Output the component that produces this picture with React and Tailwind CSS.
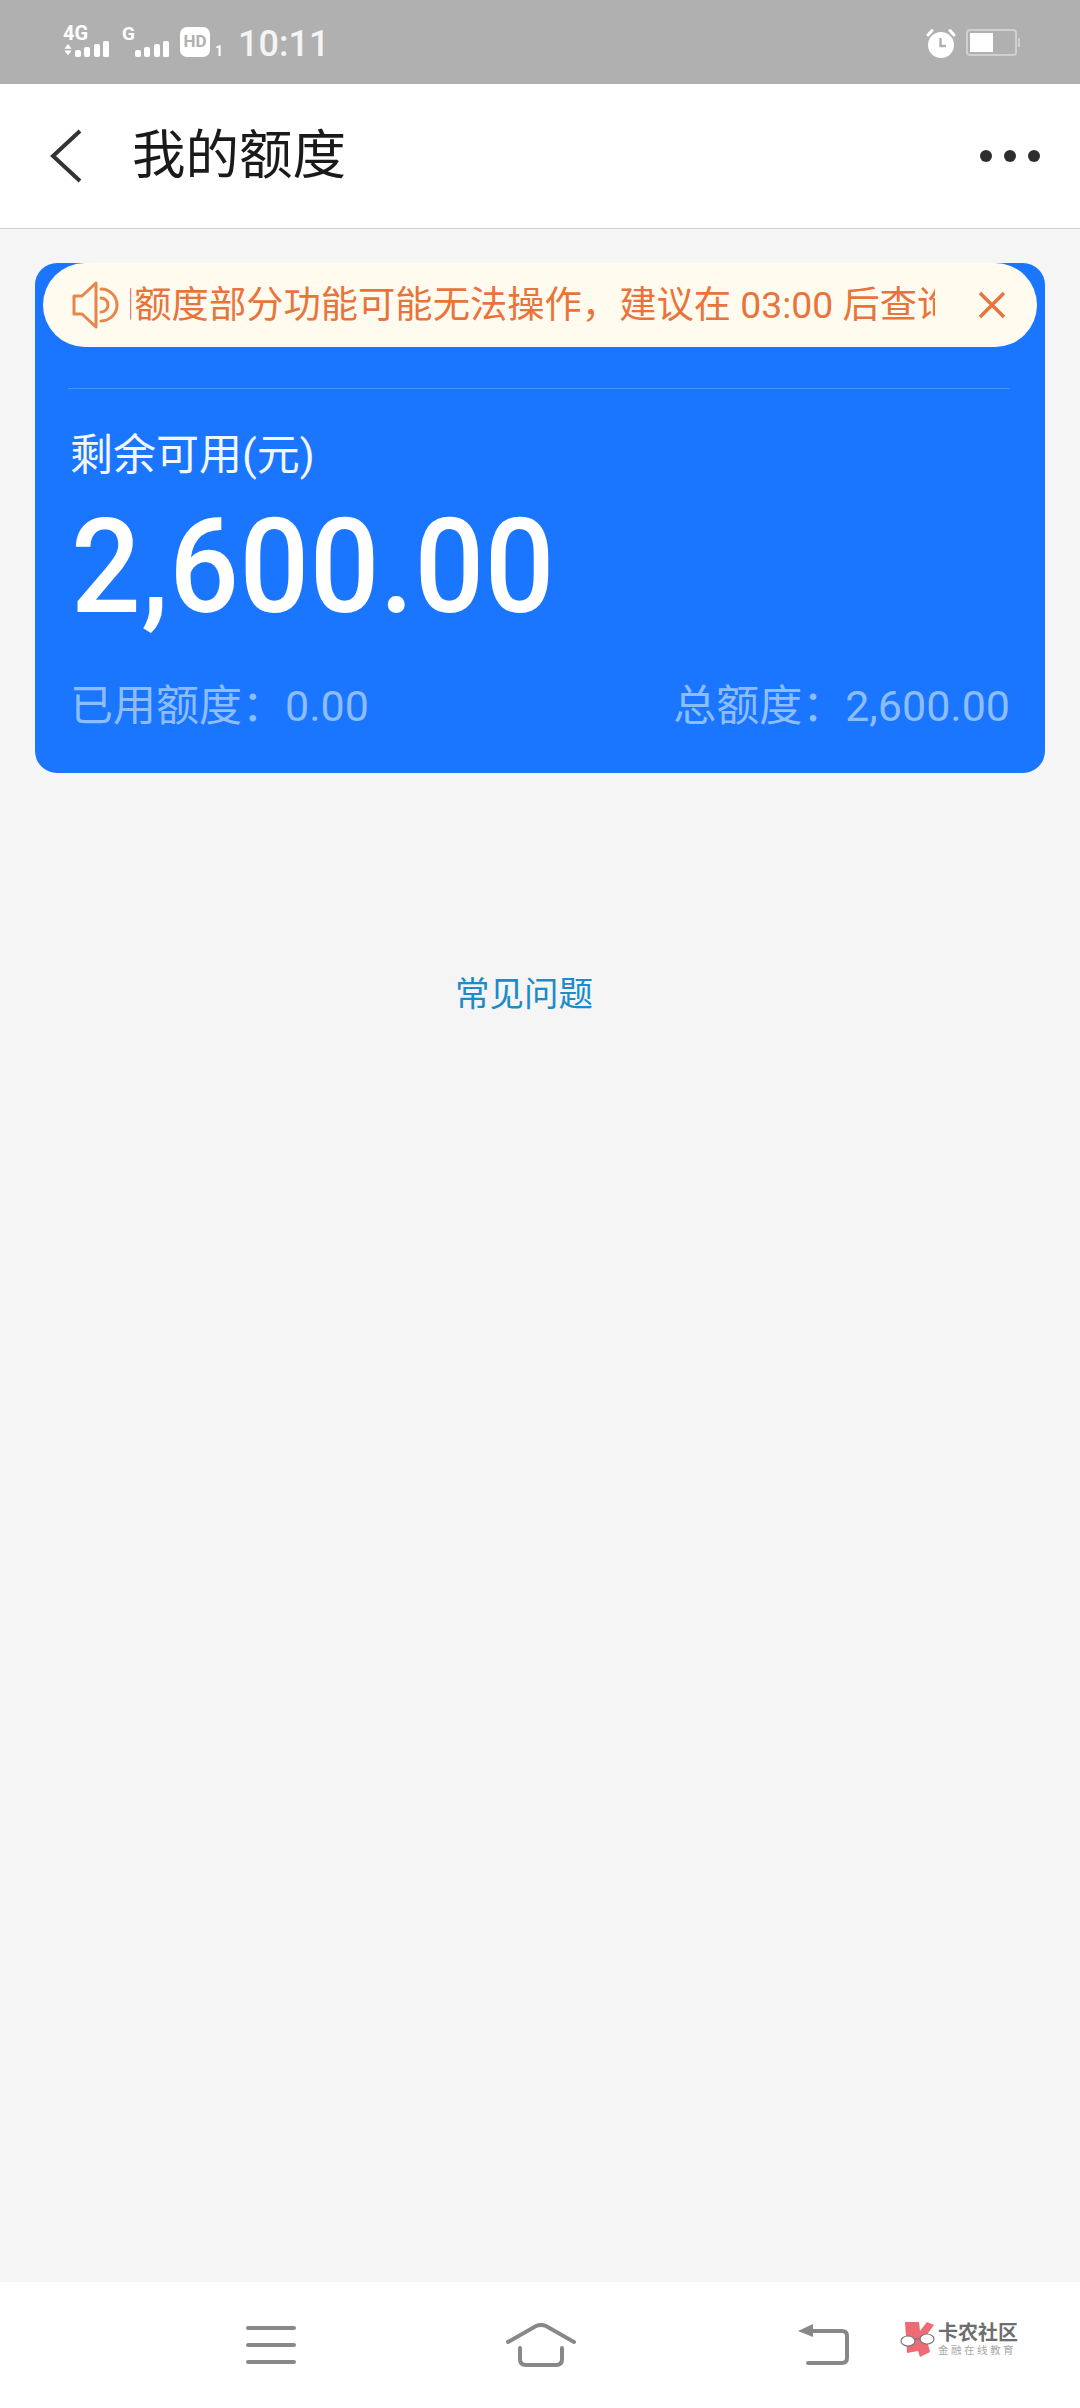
const sans = "font-['Roboto','Noto_Sans_CJK_SC',sans-serif]";

function Bars() {
  return (
    <svg width="35" height="16" viewBox="0 0 35 16" fill="#fff">
      <rect x="0" y="9" width="6" height="7" rx="2" />
      <rect x="9" y="6" width="6" height="10" rx="2" />
      <rect x="19" y="3" width="6" height="13" rx="2" />
      <rect x="28" y="0" width="6" height="16" rx="1.5" />
    </svg>
  );
}

function StatusBar() {
  return (
    <div className="h-[84px] bg-[#b0b0b0] flex items-center pl-[63px] pr-[60px] text-white shrink-0">
      <div className="relative w-[47px] h-[30px]">
        <span className="absolute left-0 -top-[2px] text-[20px] leading-[17px] font-bold font-['Roboto',sans-serif]">4G</span>
        <svg className="absolute left-[1px] top-[17px]" width="8" height="12" viewBox="0 0 10 15" fill="#fff">
          <path d="M5 0 L9.5 6 H0.5 Z M0.5 8 H9.5 L5 14 Z" />
        </svg>
        <div className="absolute left-[12px] top-[14px]"><Bars /></div>
      </div>
      <div className="relative w-[48px] h-[30px] ml-[12px]">
        <span className="absolute left-0 -top-[2px] text-[19px] leading-[17px] font-bold font-['Roboto',sans-serif]">G</span>
        <div className="absolute left-[13px] top-[14px]"><Bars /></div>
      </div>
      <div className="w-[30px] h-[30px] ml-[10px] rounded-[7px] bg-white flex items-center justify-center text-[#b0b0b0] text-[17px] font-bold font-['Roboto',sans-serif]">HD</div>
      <span className="text-[14px] leading-[12px] ml-[5px] mt-[17px] font-bold font-['Roboto',sans-serif]">1</span>
      <span className="ml-[15px] text-[36px] leading-[36px] mt-[4px] font-medium font-['Roboto',sans-serif] text-[#f4f4f4]">10:11</span>
      <div className="ml-auto flex items-center gap-[10px] mt-[1px]">
        <svg width="30" height="30" viewBox="0 0 30 30">
          <circle cx="15" cy="17" r="13" fill="#fff" />
          <path d="M2 7 L6 2.5 M28 7 L24 2.5" stroke="#fff" strokeWidth="3" strokeLinecap="round" />
          <path d="M14.5 10 V18 H20" stroke="#b0b0b0" strokeWidth="2.4" fill="none" />
        </svg>
        <div className="flex items-center">
          <div className="w-[51px] h-[27px] rounded-[4px] border-2 border-[#d0d0d0] p-[2px]">
            <div className="w-[23px] h-full bg-white" />
          </div>
          <div className="w-[2px] h-[9px] bg-[#d0d0d0] ml-[1px]" />
        </div>
      </div>
    </div>
  );
}

function Header() {
  return (
    <div className="h-[145px] bg-white border-b border-[#cfcfcf] flex items-center pl-[50px] pr-[40px] shrink-0">
      <svg width="32" height="54" viewBox="0 0 32 54" fill="none" className="shrink-0">
        <path d="M30 2 L3 27 L30 52" stroke="#333" strokeWidth="4" />
      </svg>
      <h1 className={`${sans} ml-[50px] text-[53.5px] leading-none font-normal text-[#1a1a1a]`}>我的额度</h1>
      <div className="ml-auto flex gap-[12px]">
        <div className="w-[12px] h-[12px] rounded-full bg-[#2e2e2e]" />
        <div className="w-[12px] h-[12px] rounded-full bg-[#2e2e2e]" />
        <div className="w-[12px] h-[12px] rounded-full bg-[#2e2e2e]" />
      </div>
    </div>
  );
}

function Banner() {
  return (
    <div className="h-[84px] mx-[8px] rounded-[42px] bg-[#fffbef] flex items-center pl-[29px] text-[#e8743b]">
      <svg width="47" height="48" viewBox="0 0 47 48" fill="none" stroke="#e8854a" strokeWidth="3" strokeLinejoin="round" strokeLinecap="round" className="shrink-0">
        <path d="M2 15 H10 L24 2 V46 L10 33 H2 Z" />
        <path d="M29 8 A 16 16 0 0 1 29 40" />
        <path d="M29 17 A 7 7 0 0 1 29 31" />
      </svg>
      <div className={`${sans} ml-[11px] w-[805px] overflow-hidden whitespace-nowrap text-[37.3px] leading-[50px]`}>
        <span className="ml-[-33px]">间额度部分功能可能无法操作，建议在 03:00 后查询</span>
      </div>
      <svg width="28" height="28" viewBox="0 0 28 28" className="ml-[43px] shrink-0" stroke="#e8743b" strokeWidth="3.4">
        <path d="M2 2 L26 26 M26 2 L2 26" />
      </svg>
    </div>
  );
}

function Card() {
  return (
    <div className="mt-[34px] mx-[35px] h-[510px] rounded-[22px] bg-[#1a76ff] flex flex-col shrink-0">
      <Banner />
      <div className="ml-[33px] mr-[35px] mt-[41px] h-px bg-[#4a94fb]" />
      <p className={`${sans} mt-[41px] ml-[35px] text-[43px] leading-[50px] text-[#f2f7ff]`}>剩余可用(元)</p>
      <p className="mt-[12px] ml-[36px] text-[132px] leading-[150px] font-medium text-white font-['Roboto',sans-serif] tracking-[0.5px] scale-x-[0.93] origin-left">2,600.00</p>
      <div className={`${sans} mt-[39px] mx-[35px] flex justify-between text-[43px] leading-[50px] text-[#8dbdfc]`}>
        <span>已用额度：0.00</span>
        <span>总额度：2,600.00</span>
      </div>
    </div>
  );
}

function Nav() {
  return (
    <div className="h-[126px] bg-white flex items-center pl-[246px] shrink-0">
      <svg width="50" height="40" viewBox="0 0 50 40" fill="none" stroke="#888" strokeWidth="4" strokeLinecap="round">
        <path d="M2 3 H48 M2 20 H48 M2 37 H48" />
      </svg>
      <svg width="70" height="44" viewBox="0 0 70 44" fill="none" stroke="#888" strokeWidth="4" strokeLinecap="round" className="ml-[210px]">
        <path d="M2 19 L30 3 Q35 1 40 3 L68 19" />
        <path d="M14 25 V36 Q14 42 20 42 H50 Q56 42 56 36 V25" />
      </svg>
      <svg width="51" height="42" viewBox="0 0 51 42" fill="none" className="ml-[222px]">
        <path d="M0 7 L15 0 V13 Z" fill="#888" />
        <path d="M12 7 H44 Q49 7 49 12 V34 Q49 39 44 39 H10" stroke="#888" strokeWidth="4" strokeLinecap="round" />
      </svg>
      <div className="ml-[51px] -mt-[12px] flex items-center">
        <svg width="36" height="38" viewBox="0 0 36 38" className="shrink-0">
          <path d="M5 2 L19 2 L20 11 L27 2 L34 5 L26 16 L30 32 L20 37 L18 31 L7 33 Z" fill="#ee6a74" />
          <path d="M14 20 Q17 18 20 19" stroke="#777" strokeWidth="1.2" fill="none" />
          <ellipse cx="8" cy="21" rx="7" ry="5" fill="#fff" stroke="#777" strokeWidth="1.2" />
          <ellipse cx="27" cy="19" rx="7" ry="5" fill="#fff" stroke="#777" strokeWidth="1.2" />
        </svg>
        <div className={`${sans} ml-[2px] flex flex-col`}>
          <span className="text-[20px] leading-[22px] font-bold text-[#6e6e6e] whitespace-nowrap">卡农社区</span>
          <span className="text-[10.5px] leading-[13px] text-[#a8a8a8] tracking-[2.5px] whitespace-nowrap">金融在线教育</span>
        </div>
      </div>
    </div>
  );
}

export default function App() {
  return (
    <div className="w-[1080px] h-[2408px] bg-[#f5f5f5] flex flex-col overflow-hidden">
      <StatusBar />
      <Header />
      <Card />
      <main className="flex-1 flex justify-center">
        <a className={`${sans} mt-[199px] h-[44px] text-[34.5px] leading-[44px] text-[#1b8bc9] -translate-x-[16px]`}>常见问题</a>
      </main>
      <Nav />
    </div>
  );
}
